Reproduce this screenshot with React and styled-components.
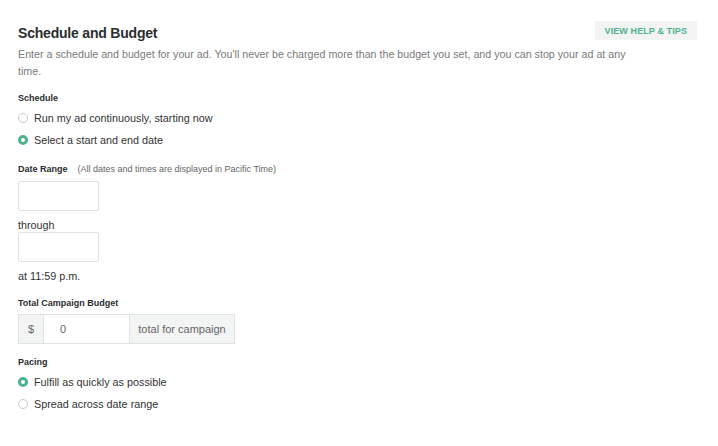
import React, { useState } from "react";
import styled, { createGlobalStyle } from "styled-components";

const GlobalStyle = createGlobalStyle`
  body {
    margin: 0;
    background: #fff;
    font-family: "Liberation Sans", Arial, sans-serif;
    color: #333;
  }
`;

const Page = styled.div`
  padding: 21px 21px 20px 18px;
`;

const Header = styled.div`
  display: flex;
  justify-content: space-between;
  align-items: flex-start;
`;

const Title = styled.h1`
  margin: 4px 0 0;
  font-size: 14px;
  letter-spacing: -0.2px;
  font-weight: 700;
  color: #2b2d2f;
`;

const HelpButton = styled.button`
  border: none;
  background: #f2f3f3;
  color: #4db38f;
  font-family: inherit;
  font-size: 9px;
  font-weight: 700;
  letter-spacing: 0.1px;
  height: 19px;
  padding: 0 10px;
  cursor: pointer;
`;

const Description = styled.p`
  margin: 5px 0 0;
  max-width: 630px;
  font-size: 10.7px;
  line-height: 17px;
  color: #7a7a7a;
`;

const Section = styled.div`
  margin-top: ${(p) => p.$top || 18}px;
`;

const Label = styled.div`
  font-size: 9px;
  font-weight: 700;
  color: #2b2d2f;
  margin-bottom: ${(p) => p.$gap || 7}px;
`;

const Note = styled.span`
  font-weight: 400;
  font-size: 9px;
  color: #666;
  margin-left: 10px;
`;

const RadioRow = styled.label`
  display: flex;
  align-items: center;
  gap: 6px;
  height: 22px;
  font-size: 10.8px;
  color: #333;
  cursor: pointer;
`;

const Circle = styled.span`
  width: 10px;
  height: 10px;
  border-radius: 50%;
  box-sizing: border-box;
  border: ${(p) => (p.$on ? "3px solid #4db38f" : "1px solid #c9cccc")};
  background: #fff;
`;

const DateBox = styled.input`
  display: block;
  box-sizing: border-box;
  width: 81px;
  height: 30px;
  border: 1px solid #e1e3e3;
  border-radius: 2px;
  margin: ${(p) => p.$top || 0}px 0 0;
  font-family: inherit;
`;

const Text = styled.div`
  font-size: 10.8px;
  color: #333;
  margin-top: ${(p) => p.$top || 0}px;
`;

const InputGroup = styled.div`
  display: flex;
  height: 30px;
  width: 217px;
  border: 1px solid #e1e3e3;
  box-sizing: border-box;
`;

const Addon = styled.div`
  display: flex;
  align-items: center;
  justify-content: center;
  flex: 0 0 ${(p) => p.$w}px;
  white-space: nowrap;
  background: #f3f4f4;
  color: #666;
  font-size: 11px;
  border-left: ${(p) => (p.$right ? "1px solid #e1e3e3" : "none")};
  border-right: ${(p) => (p.$right ? "none" : "1px solid #e1e3e3")};
`;

const Amount = styled.input`
  flex: 1;
  min-width: 0;
  border: none;
  outline: none;
  padding: 0 0 0 16px;
  font-family: inherit;
  font-size: 11px;
  color: #666;
`;

function Radio({ checked, onChange, children }) {
  return (
    <RadioRow onClick={onChange}>
      <Circle $on={checked} />
      {children}
    </RadioRow>
  );
}

export default function App() {
  const [schedule, setSchedule] = useState("range");
  const [pacing, setPacing] = useState("fast");

  return (
    <Page>
      <GlobalStyle />
      <Header>
        <Title>Schedule and Budget</Title>
        <HelpButton>VIEW HELP &amp; TIPS</HelpButton>
      </Header>
      <Description>
        Enter a schedule and budget for your ad. You'll never be charged more than the budget you set,
        and you can stop your ad at any time.
      </Description>

      <Section $top={13}>
        <Label $gap={4}>Schedule</Label>
        <Radio checked={schedule === "now"} onChange={() => setSchedule("now")}>
          Run my ad continuously, starting now
        </Radio>
        <Radio checked={schedule === "range"} onChange={() => setSchedule("range")}>
          Select a start and end date
        </Radio>
      </Section>

      <Section $top={13}>
        <Label $gap={0}>
          Date Range<Note>(All dates and times are displayed in Pacific Time)</Note>
        </Label>
        <DateBox $top={3} />
        <Text $top={8}>through</Text>
        <DateBox $top={1} />
        <Text $top={8}>at 11:59 p.m.</Text>
      </Section>

      <Section $top={16}>
        <Label $gap={6}>Total Campaign Budget</Label>
        <InputGroup>
          <Addon $w={24}>$</Addon>
          <Amount defaultValue="0" />
          <Addon $right $w={104}>total for campaign</Addon>
        </InputGroup>
      </Section>

      <Section $top={13}>
        <Label $gap={4}>Pacing</Label>
        <Radio checked={pacing === "fast"} onChange={() => setPacing("fast")}>
          Fulfill as quickly as possible
        </Radio>
        <Radio checked={pacing === "spread"} onChange={() => setPacing("spread")}>
          Spread across date range
        </Radio>
      </Section>
    </Page>
  );
}
